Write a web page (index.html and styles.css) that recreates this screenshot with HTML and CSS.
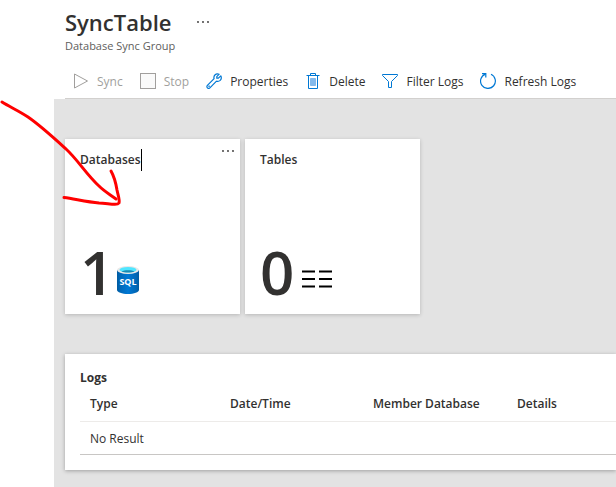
FILE: index.html
```html
<!DOCTYPE html>
<html lang="en">
<head>
    <meta charset="UTF-8">
    <title>SyncTable</title>
    <meta name="viewport" content="width=device-width, initial-scale=1.0">
    <link rel="stylesheet" href="styles.css">
</head>
<body>
    <div class="blade">
        <header class="blade-header">
            <div class="title-row">
                <h1>SyncTable</h1>
                <button class="more-btn" aria-label="More">
                    <svg width="12" height="4" viewBox="0 0 12 4" fill="#323130"><circle cx="1" cy="2" r="0.900"/><circle cx="6" cy="2" r="0.900"/><circle cx="11" cy="2" r="0.900"/></svg>
                </button>
            </div>
            <p class="subtitle">Database Sync Group</p>

            <div class="toolbar">
                <button class="tool" disabled>
                    <svg width="16" height="16" viewBox="0 0 16 16" fill="none" stroke="#a19f9d"><path d="M1.500 1v14L14.500 8z"/></svg>
                    Sync
                </button>
                <button class="tool" disabled>
                    <svg width="16" height="16" viewBox="0 0 16 16" fill="#fafafa" stroke="#a19f9d"><rect x="0.500" y="0.500" width="15" height="15"/></svg>
                    Stop
                </button>
                <button class="tool">
                    <svg width="16" height="16" viewBox="0 0 16 16" fill="none" stroke="#0078d4" stroke-width="1.200" stroke-linejoin="round"><path d="M13.200 1.200 10.800 3.600v1.600h1.600l2.400-2.400c.9 1.900.4 3.600-.6 4.600-1 .9-2.400 1.200-3.700.8l-6.600 6.600c-.7.700-1.800.7-2.500 0s-.7-1.800 0-2.500l6.700-6.700c-.4-1.200-.1-2.600.8-3.600 1.100-1.100 2.600-1.400 4.300-.8z"/><path d="M2.800 13.200h.6" stroke-linecap="round"/></svg>
                    Properties
                </button>
                <button class="tool">
                    <svg width="16" height="16" viewBox="0 0 16 16" fill="none" stroke="#0078d4"><path d="M1.500 2.500h13M5.500 2.500v-2h5v2M3.500 2.500v13h9v-13"/><path d="M5.500 5.500h5v7h-5z" fill="#83b9eb" stroke="#83b9eb"/></svg>
                    Delete
                </button>
                <button class="tool">
                    <svg width="16" height="16" viewBox="0 0 16 16" fill="none" stroke="#0078d4"><path d="M.5 1.500h15v1L9.500 8.500v6h-3v-6L.5 2.500z"/></svg>
                    Filter Logs
                </button>
                <button class="tool">
                    <svg width="16" height="16" viewBox="0 0 16 16" fill="none" stroke="#0078d4" stroke-width="1.200"><path d="M11 1.300a7.400 7.400 0 1 1-5.600-.2"/><path d="M2 .7h3.800v3.800"/></svg>
                    Refresh Logs
                </button>
            </div>
        </header>

        <main class="content">
            <div class="tiles">
                <section class="tile">
                    <div class="tile-head">
                        <h2 class="caret">Databases</h2>
                        <button class="more-btn" aria-label="Tile options">
                            <svg width="12" height="4" viewBox="0 0 12 4" fill="#323130"><circle cx="1" cy="2" r="0.900"/><circle cx="6" cy="2" r="0.900"/><circle cx="11" cy="2" r="0.900"/></svg>
                        </button>
                    </div>
                    <div class="tile-value">
                        <span class="number">1</span>
                        <svg class="sql-icon" width="24" height="30" viewBox="0 0 24 30">
                            <defs>
                                <linearGradient id="cyl">
                                    <stop offset="0" stop-color="#005ba1"/>
                                    <stop offset="0.15" stop-color="#0068b8"/>
                                    <stop offset="0.5" stop-color="#0078d4"/>
                                    <stop offset="0.85" stop-color="#0068b8"/>
                                    <stop offset="1" stop-color="#005ba1"/>
                                </linearGradient>
                            </defs>
                            <path d="M1 5v20c0 2.200 5 4 11 4s11-1.800 11-4V5z" fill="url(#cyl)"/>
                            <ellipse cx="12" cy="5" rx="11" ry="4" fill="#e8e8e8"/>
                            <ellipse cx="12" cy="4.700" rx="8.500" ry="2.800" fill="#50e6ff"/>
                            <path d="M5.500 6.400c1.600-.8 3.800-1.200 6.500-1.200s4.900.4 6.500 1.200c-1.600.8-3.800 1.100-6.500 1.100s-4.900-.3-6.500-1.100z" fill="#198ab3"/>
                            <text x="12" y="20" text-anchor="middle">SQL</text>
                        </svg>
                    </div>
                </section>
                <section class="tile">
                    <div class="tile-head">
                        <h2>Tables</h2>
                    </div>
                    <div class="tile-value">
                        <span class="number">0</span>
                        <svg class="rows-icon" width="30" height="18" viewBox="0 0 30 18" stroke="#000" stroke-width="2"><path d="M0 1.500h13M17 1.500h13M0 9h13M17 9h13M0 16.500h13M17 16.500h13"/></svg>
                    </div>
                </section>
            </div>

            <section class="logs">
                <h2>Logs</h2>
                <table>
                    <thead>
                        <tr>
                            <th class="col-type">Type</th>
                            <th class="col-date">Date/Time</th>
                            <th class="col-member">Member Database</th>
                            <th>Details</th>
                        </tr>
                    </thead>
                    <tbody>
                        <tr>
                            <td colspan="4">No Result</td>
                        </tr>
                    </tbody>
                </table>
            </section>
        </main>
    </div>

    <!-- hand-drawn arrow on top of the page -->
    <svg class="arrow" width="130" height="220" viewBox="0 0 130 220">
        <path d="M2 102C10 107 19 111 28 117C41 126 54 138 66 149C78 160 86 174 99 186C105 192 111 195 116 199"/>
        <path d="M111 171C115 178 116 184 117 190C118 195 120 200 119 203C117 206 107 203 99 203C87 202 75 199 64 197.500"/>
    </svg>
</body>
</html>
```
FILE: styles.css
```css
* {
    margin: 0;
    padding: 0;
    box-sizing: border-box;
}

body {
    background: #fff;
    color: #323130;
    font-family: "Segoe UI", "Open Sans", "Noto Sans", sans-serif;
    font-size: 12px;
    line-height: 18px;
    overflow-x: hidden;
}

button {
    background: none;
    border: none;
    color: inherit;
    font: inherit;
    cursor: pointer;
}

svg {
    display: block;
    flex-shrink: 0;
}

.blade {
    display: flex;
    flex-direction: column;
    min-height: 100vh;
    padding-left: 54px;
}

.blade-header {
    padding: 6px 0 0 11px;
}

.title-row {
    display: flex;
    align-items: center;
    gap: 26px;
}

.title-row h1 {
    font-size: 22px;
    font-weight: 600;
    line-height: 32px;
}

.subtitle {
    color: #605e5c;
    font-size: 11px;
    line-height: 16px;
}

.toolbar {
    display: flex;
    gap: 17px;
    padding: 19px 0 7px 8px;
    border-bottom: 1px solid #d2d0ce;
}

.tool {
    display: flex;
    align-items: center;
    gap: 8px;
    white-space: nowrap;
}

.tool svg {
    margin-bottom: 2px;
}

.tool:disabled {
    color: #a19f9d;
    cursor: default;
}

.content {
    flex: 1;
    background: #e3e3e3;
    padding: 40px 0 18px 11px;
}

.tiles {
    display: flex;
    gap: 5px;
    margin-bottom: 40px;
}

.tile {
    display: flex;
    flex-direction: column;
    justify-content: space-between;
    width: 175px;
    height: 175px;
    padding: 10px 6px 12px 15px;
    background: #fff;
    box-shadow: 0 1px 4px rgba(0, 0, 0, 0.2);
}

.tile-head {
    display: flex;
    justify-content: space-between;
}

.tile-head h2 {
    font-size: 12px;
    font-weight: 600;
    line-height: 22px;
}

.caret {
    border-right: 1px solid #000;
}

.tile-head .more-btn {
    align-self: flex-start;
}

.tile-value {
    display: flex;
    align-items: flex-end;
    gap: 2px;
}

.number {
    font-size: 60px;
    font-weight: 600;
    line-height: 60px;
}

.sql-icon {
    margin-bottom: 7px;
}

.sql-icon text {
    fill: #fff;
    font-size: 9px;
    font-weight: 700;
}

.rows-icon {
    margin: 0 0 14px 6px;
}

.logs {
    background: #fff;
    padding: 15px 0 15px 15px;
    box-shadow: 0 1px 4px rgba(0, 0, 0, 0.3);
}

.logs h2 {
    font-size: 12px;
    font-weight: 700;
    line-height: 18px;
}

table {
    width: 100%;
    border-collapse: collapse;
    table-layout: fixed;
}

th,
td {
    padding: 8px 10px;
    text-align: left;
}

th {
    font-weight: 600;
    white-space: nowrap;
    border-bottom: 1px solid #edebe9;
}

td {
    padding-bottom: 6px;
    border-bottom: 1px solid #c8c6c4;
}

.col-type {
    width: 140px;
}

.col-date {
    width: 143px;
}

.col-member {
    width: 144px;
}

.arrow {
    position: absolute;
    top: 0;
    left: 0;
    fill: none;
    stroke: #f00;
    stroke-width: 3;
    stroke-linecap: round;
    stroke-linejoin: round;
    pointer-events: none;
}
```
